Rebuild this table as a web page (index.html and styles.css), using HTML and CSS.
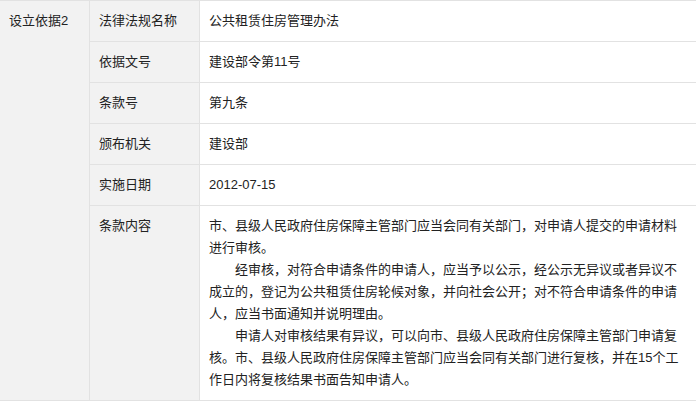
FILE: index.html
```html
<!DOCTYPE html>
<html lang="zh-CN">
<head>
  <meta charset="UTF-8" />
  <meta name="viewport" content="width=device-width, initial-scale=1.0" />
  <title>设立依据</title>
  <link rel="stylesheet" href="styles.css">
</head>
<body>
  <table class="basis-table">
    <colgroup>
      <col class="col-group" />
      <col class="col-label" />
      <col class="col-value" />
    </colgroup>
    <tr class="stub">
      <td></td>
      <td></td>
      <td></td>
    </tr>
    <tr>
      <td class="group" rowspan="6">设立依据2</td>
      <td class="label">法律法规名称</td>
      <td class="value">公共租赁住房管理办法</td>
    </tr>
    <tr>
      <td class="label">依据文号</td>
      <td class="value">建设部令第11号</td>
    </tr>
    <tr>
      <td class="label">条款号</td>
      <td class="value">第九条</td>
    </tr>
    <tr>
      <td class="label">颁布机关</td>
      <td class="value">建设部</td>
    </tr>
    <tr>
      <td class="label">实施日期</td>
      <td class="value">2012-07-15</td>
    </tr>
    <tr>
      <td class="label">条款内容</td>
      <td class="value">
        <p class="first">市、县级人民政府住房保障主管部门应当会同有关部门，对申请人提交的申请材料进行审核。</p>
        <p>经审核，对符合申请条件的申请人，应当予以公示，经公示无异议或者异议不成立的，登记为公共租赁住房轮候对象，并向社会公开；对不符合申请条件的申请人，应当书面通知并说明理由。</p>
        <p>申请人对审核结果有异议，可以向市、县级人民政府住房保障主管部门申请复核。市、县级人民政府住房保障主管部门应当会同有关部门进行复核，并在15个工作日内将复核结果书面告知申请人。</p>
      </td>
    </tr>
  </table>
</body>
</html>
```

FILE: styles.css
```css
body {
  margin: 0;
  background: #fff;
  font-family: "Liberation Sans", "Noto Sans CJK SC", sans-serif;
  font-size: 13px;
  color: #222;
  overflow: hidden;
}

.basis-table {
  border-collapse: collapse;
  table-layout: fixed;
  width: 697px;
  margin-left: -1px;
}

.col-group {
  width: 90px;
}

.col-label {
  width: 110px;
}

.col-value {
  width: 497px;
}

.basis-table td {
  border: 1px solid #e2e2e2;
  padding: 9px 10px 9px 9px;
  line-height: 22px;
  vertical-align: top;
}

.basis-table .stub td {
  padding: 0;
  height: 0;
  line-height: 0;
  border-top: none;
}

.group,
.label {
  background: #f2f2f2;
}

.value {
  background: #fff;
}

.value p {
  margin: 0;
  text-indent: 2em;
}

.value p.first {
  text-indent: 0;
}
```
